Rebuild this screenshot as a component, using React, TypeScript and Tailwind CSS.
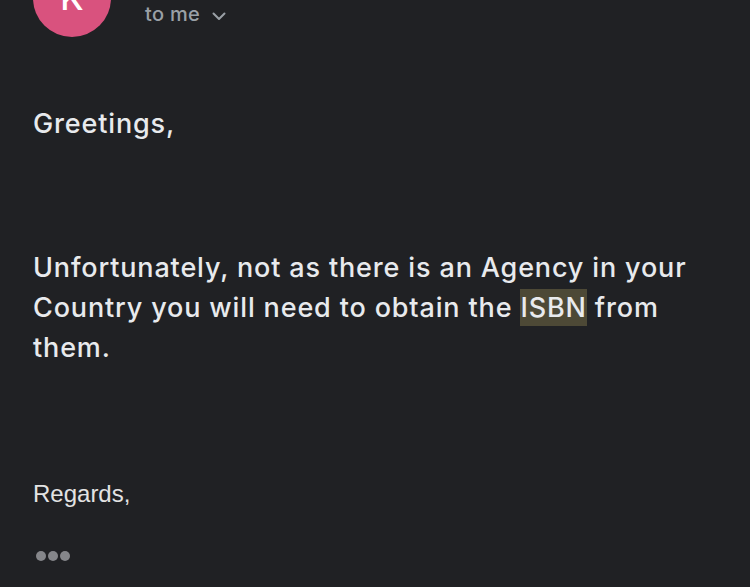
export default function App() {
  return (
    <div
      className="h-[587px] w-[750px] overflow-hidden bg-[#202124] text-[#e8eaed]"
      style={{ fontFamily: 'Inter, "Noto Sans", sans-serif' }}
    >
      {/* header */}
      <div className="flex items-start">
        <div className="ml-[33px] mt-[-41px] flex h-[78px] w-[78px] shrink-0 items-center justify-center rounded-full bg-[#d9527e]">
          <span className="text-[34px] font-medium leading-none text-white">K</span>
        </div>
        <div className="ml-[34px] mt-[2px] flex items-center gap-[12px] text-[20px] font-medium leading-[24px] tracking-[0.3px] text-[#9aa0a6]">
          <span>to me</span>
          <svg width="14" height="9" viewBox="0 0 14 9" fill="none" className="mt-[4px]">
            <path d="M1.5 1.5 L7 7 L12.5 1.5" stroke="#9aa0a6" strokeWidth="2" strokeLinecap="round" strokeLinejoin="round" />
          </svg>
        </div>
      </div>

      {/* body */}
      <div className="px-[33px] pt-[67px]">
        <p className="text-[27px] font-medium leading-[40px] tracking-[0.85px]">Greetings,</p>
        <p className="mt-[104px] text-[27px] font-medium leading-[40px] tracking-[0.85px]">
          Unfortunately, not as there is an Agency in your Country you will need to obtain the{" "}
          <span className="bg-[#4d4936] py-[2px]">ISBN</span> from them.
        </p>
        <p
          className="mt-[112px] text-[24px] leading-[28px] text-[#e3e3e3]"
          style={{ fontFamily: '"Liberation Sans", Arial, sans-serif' }}
        >
          Regards,
        </p>
        <div className="ml-[3px] mt-[43px] flex gap-[2px]">
          <span className="h-[10px] w-[10px] rounded-full bg-[#85868a]" />
          <span className="h-[10px] w-[10px] rounded-full bg-[#85868a]" />
          <span className="h-[10px] w-[10px] rounded-full bg-[#85868a]" />
        </div>
      </div>
    </div>
  );
}
